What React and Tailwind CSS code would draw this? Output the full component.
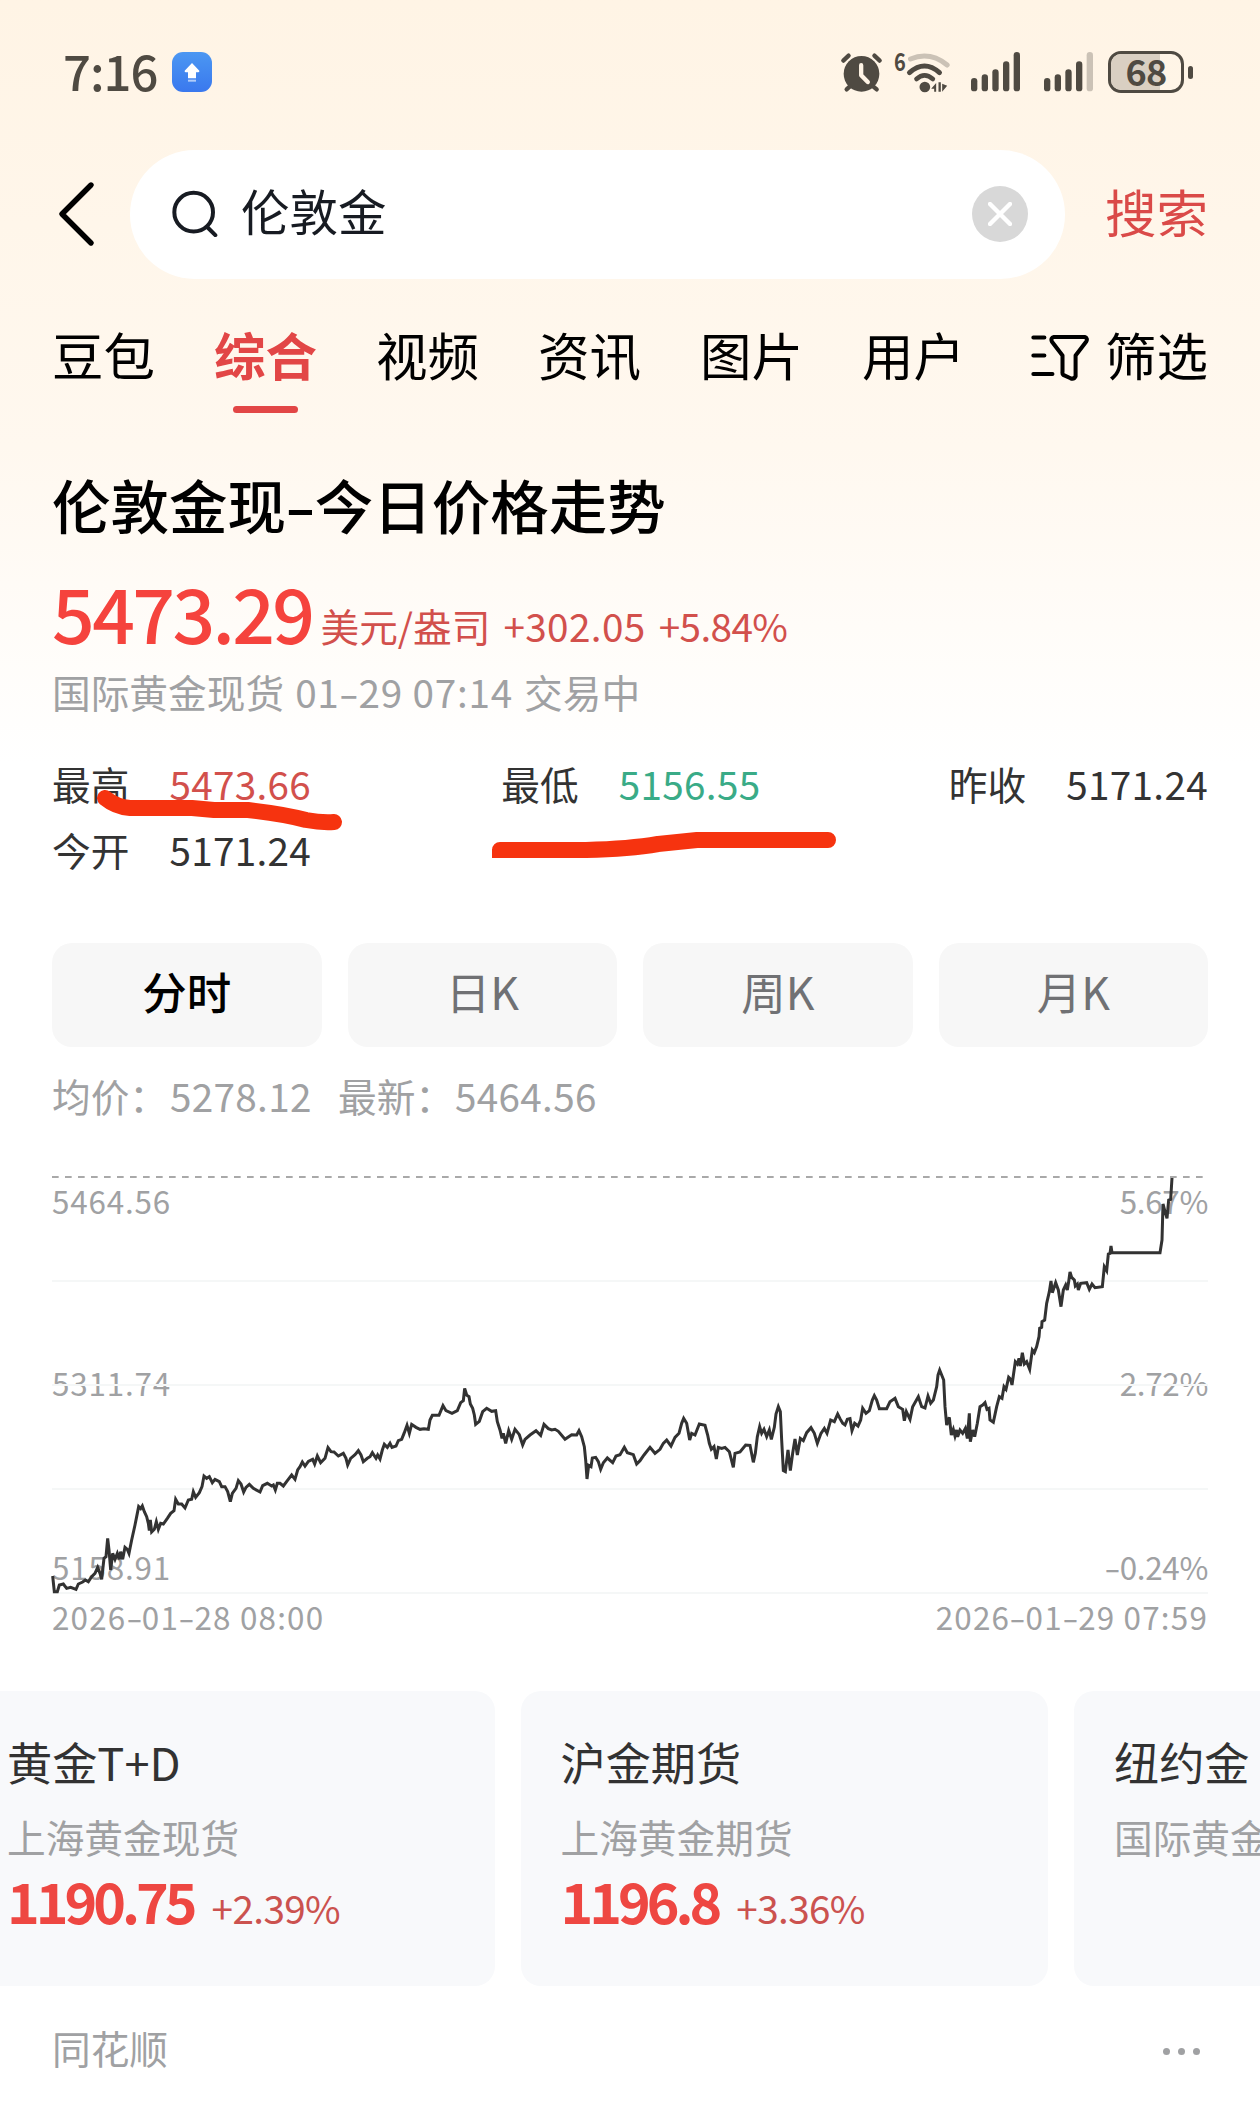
import React from 'react';

const tabs = ['豆包', '综合', '视频', '资讯', '图片', '用户'];

const periods = ['分时', '日K', '周K', '月K'];

const stats = [
  { label: '最高', value: '5473.66', color: 'text-[#d2504c]' },
  { label: '最低', value: '5156.55', color: 'text-[#3aab87]' },
  { label: '昨收', value: '5171.24', color: 'text-[#333333]' },
  { label: '今开', value: '5171.24', color: 'text-[#333333]' },
];

const cards = [
  { name: '黄金T+D', market: '上海黄金现货', price: '1190.75', change: '+2.39%' },
  { name: '沪金期货', market: '上海黄金期货', price: '1196.8', change: '+3.36%' },
  { name: '纽约金', market: '国际黄金期货', price: '', change: '' },
];

// Price series, three thirds of the trading day, three units to a pixel
const series = [
  {
    dx: 0,
    dy: 0,
    points:
      '158,1308 163,1355 172,1355 178,1335 190,1332 200,1345 212,1342 228,1348 235,1332 248,1326 256,1320 265,1325 275,1310 285,1300 293,1282 300,1300 305,1318 312,1255 318,1250 323,1195 327,1230 332,1290 338,1240 345,1258 352,1240 358,1258 362,1235 368,1258 375,1222 382,1228 387,1240 395,1200 405,1155 410,1130 416,1100 422,1106 427,1098 433,1115 440,1130 445,1150 448,1172 451,1140 455,1176 463,1168 469,1145 475,1168 482,1150 490,1152 502,1135 512,1120 522,1112 527,1078 535,1092 545,1092 555,1104 565,1080 575,1078 580,1055 587,1072 598,1058 606,1040 612,1008 620,1015 628,1010 637,1028 645,1018 658,1025 665,1040 675,1040 683,1055 691,1085 697,1060 708,1045 715,1022 723,1032 731,1056 738,1042 748,1033 760,1045 780,1056 788,1037 802,1030 815,1038 820,1035 826,1050 832,1030 840,1030 850,1038 862,1022 875,1005 885,1018 893,990 900,980 907,966 915,978 925,964 938,958 944,972 952,948 962,968 975,955 984,923 993,935 1002,936 1015,948 1030,940 1038,955 1043,975 1052,955 1065,944 1075,932 1083,945 1090,965 1102,955 1110,950 1117,938 1128,955 1133,945 1140,957 1147,930 1153,913 1162,922 1170,910 1176,922 1188,918 1195,902 1205,898 1213,878 1221,856 1228,880 1235,853 1248,862',
  },
  {
    dx: 1260,
    dy: 600,
    points:
      '0,268 12,266 25,268 30,240 37,226 57,226 69,197 78,212 96,220 112,212 122,188 130,182 134,145 140,165 147,170 151,192 158,205 163,225 167,253 178,244 188,215 200,205 215,214 227,212 232,245 240,270 246,295 250,280 257,310 266,272 275,298 285,268 298,284 308,315 315,298 330,285 348,272 362,286 372,253 385,266 395,270 405,268 415,274 435,298 455,284 470,285 477,272 485,290 493,320 497,360 501,417 506,376 513,380 517,354 527,352 535,365 542,388 550,368 562,354 578,368 588,348 600,344 613,322 622,338 640,344 650,372 660,362 672,345 690,322 705,340 720,328 730,310 740,300 753,318 765,292 777,280 785,250 791,235 800,250 809,300 815,280 825,285 838,252 855,256 863,285 868,310 874,328 882,320 889,357 895,322 905,325 915,322 928,335 940,382 945,340 960,336 977,315 990,316 1000,367 1006,340 1012,290 1019,260 1025,280 1032,268 1040,290 1048,270 1054,298 1063,262 1068,222 1075,200 1081,215 1085,300 1090,392 1096,395 1104,330 1111,392 1118,340 1125,297 1132,345 1141,295 1150,302 1160,278 1173,263 1183,280 1192,310 1203,280 1213,265 1221,280 1232,240 1243,245 1253,222',
  },
  {
    dx: 2520,
    dy: 0,
    points:
      '0,836 8,850 15,855 22,838 30,836 36,872 44,850 54,858 62,840 68,805 78,820 88,812 97,780 103,767 110,780 118,806 140,806 150,785 165,775 175,800 188,808 193,842 199,815 210,838 218,800 235,770 245,800 255,804 264,768 272,790 280,780 290,740 294,705 299,690 311,720 315,800 320,855 328,832 334,885 340,868 345,888 350,870 353,890 360,870 368,880 376,865 382,895 388,820 391,905 398,870 404,890 412,850 420,800 428,795 435,788 441,808 447,805 450,840 460,847 470,800 478,770 486,775 492,740 498,748 506,712 512,718 516,735 521,700 526,665 532,672 537,655 541,678 547,638 553,672 560,665 569,688 577,630 583,638 590,620 597,590 599,565 605,562 606,545 614,540 620,490 628,455 633,423 637,458 647,428 655,450 663,500 670,450 677,435 682,450 686,425 690,396 695,412 703,420 706,438 712,432 715,450 722,430 740,428 748,448 756,432 765,443 787,440 793,380 800,392 805,342 810,340 813,318 816,338 960,338 966,300 969,192 975,215 981,235 986,180 992,178 996,114',
  },
];

const linePoints = series
  .flatMap((s) =>
    s.points.split(' ').map((p) => {
      const [x, y] = p.split(',').map(Number);
      return `${x + s.dx},${y + s.dy}`;
    })
  )
  .join(' ');

// Wide hyphen, as in the phone's system font
function Dash() {
  return <span className="inline-block w-[0.49em] text-center tracking-normal"><span className="inline-block scale-x-150">-</span></span>;
}

function Dashed({ text }) {
  return text.split('-').map((part, i) => (
    <React.Fragment key={i}>
      {i > 0 && <Dash />}
      {part}
    </React.Fragment>
  ));
}

function SignalBars({ weak }) {
  return (
    <svg viewBox="0 0 147 120" className="w-[49px] h-[40px]" fill="#4f4a42">
      <rect x="0" y="78" width="19" height="40" rx="9.5" />
      <rect x="32" y="67" width="19" height="51" rx="9.5" />
      <rect x="64" y="52" width="19" height="66" rx="9.5" />
      <rect x="96" y="28" width="19" height="90" rx="9.5" />
      <rect x="128" y="0" width="19" height="118" rx="9.5" fill={weak ? '#cbc2b6' : '#4f4a42'} />
    </svg>
  );
}

function StatusBar() {
  return (
    <div className="h-[144px] flex items-center pl-[63px] pr-[67px] text-[#4f4a42]">
      <span className="text-[49px] leading-none font-medium tracking-[-0.02em] -translate-y-[3px]">7:16</span>
      <div className="ml-[15px] w-10 h-10 rounded-[11px] bg-linear-to-b from-[#4c97f2] to-[#3a78ee] flex items-center justify-center">
        <svg viewBox="0 0 48 60" className="w-4 h-5" fill="#fff">
          <path d="M24 3 L46 26 Q47 31 42 31 H36 V49 H12 V31 H6 Q1 31 2 26 Z" />
          <rect x="12" y="53" width="24" height="6" opacity="0.6" />
        </svg>
      </div>

      <div className="ml-auto flex items-center">
        <svg viewBox="30 34 130 124" className="w-[43px] h-[41px]" fill="none" stroke="#4f4a42" strokeLinecap="round">
          <circle cx="95" cy="100" r="54" fill="#4f4a42" stroke="none" />
          <path d="M40 60 L56 45 M134 45 L150 60" strokeWidth="13" />
          <path d="M60 138 L50 147 M130 138 L141 147" strokeWidth="13" />
          <path d="M94 74 V104 L114 125" stroke="#fff4e5" strokeWidth="13" strokeLinejoin="round" />
        </svg>
        <div className="relative ml-[11px]">
          <svg viewBox="193 30 170 126" className="w-[57px] h-[42px]" fill="none" stroke="#4f4a42" strokeLinecap="round">
            <path d="M242 54 Q300 30 352 72" stroke="#cbc2b6" strokeWidth="15" />
            <path d="M239 95 Q284 55 329 95" strokeWidth="15" />
            <path d="M260 114 Q284 92 309 114" strokeWidth="14" />
            <circle cx="285" cy="138" r="16" fill="#4f4a42" stroke="none" />
            <path d="M319 126 V152 H313 V143 L304 143 Z M326 124 H333 V152 H326 Z M337 128 L352 134 L337 152 Z" fill="#4f4a42" stroke="none" />
          </svg>
          <span className="absolute left-0 top-[-3px] text-[25px] leading-none font-bold origin-left scale-x-80">6</span>
        </div>
        <div className="ml-[20px]"><SignalBars /></div>
        <div className="ml-[24px]"><SignalBars weak /></div>
        <div className="relative ml-[15px] w-[76px] h-[42px] rounded-[13px] border-[3px] border-[#4f4a42] flex items-center justify-center">
          <div className="absolute left-0 top-0 w-[49px] h-full rounded-l-[10px] bg-[#d9cfc2]" />
          <span className="relative text-[36px] leading-[36px] font-bold tracking-[-0.02em] -translate-y-[2px]">68</span>
        </div>
        <div className="ml-[4px] w-[5px] h-[13px] rounded-full bg-[#4f4a42]" />
      </div>
    </div>
  );
}

function SearchRow() {
  return (
    <div className="mt-[6px] h-[129px] flex items-center pl-[58px] pr-[52px]">
      <svg viewBox="0 0 38 66" className="w-[38px] h-[66px] -translate-y-px" fill="none" stroke="#000" strokeWidth="5.4" strokeLinecap="round" strokeLinejoin="round">
        <path d="M33 4 L4 33 L33 62" />
      </svg>
      <div className="ml-[34px] w-[935px] h-full rounded-full bg-white flex items-center pl-[42px] pr-[37px]">
        <svg viewBox="0 0 138 140" className="w-[46px] h-[47px] -translate-y-px" fill="none" stroke="#171b22" strokeWidth="12" strokeLinecap="round">
          <circle cx="65" cy="66" r="58" />
          <path d="M107 112 L130 135" />
        </svg>
        <span className="ml-[23px] text-[48.5px] leading-none text-[#171b22] -translate-y-[4px]">伦敦金</span>
        <div className="ml-auto w-14 h-14 rounded-full bg-[#d8d8d8] flex items-center justify-center -translate-y-px">
          <svg viewBox="0 0 24 24" className="w-6 h-6" stroke="#fff" strokeWidth="4.4" strokeLinecap="round">
            <path d="M2 2 L22 22 M22 2 L2 22" />
          </svg>
        </div>
      </div>
      <span className="ml-auto text-[51.5px] leading-none text-[#da4a48] -translate-y-[4px]">搜索</span>
    </div>
  );
}

function Tabs() {
  return (
    <div className="mt-[42px] h-[100px] flex items-start px-[52px]">
      <div className="flex gap-[59px]">
        {tabs.map((tab) => (
          <div key={tab} className="flex flex-col items-center">
            <span className={`text-[51.5px] leading-[66px] ${tab === '综合' ? 'font-bold text-[#e24646]' : 'text-black'}`}>{tab}</span>
            {tab === '综合' && <span className="mt-[19px] w-[65px] h-[7px] rounded-full bg-[#e24646]" />}
          </div>
        ))}
      </div>
      <div className="ml-auto flex items-center">
        <svg viewBox="64 48 176 140" className="w-[59px] h-[47px] mt-[6px]" fill="none" stroke="#000" strokeWidth="12" strokeLinecap="round" strokeLinejoin="round">
          <path d="M71 58 H104 M71 112 H104 M71 167 H128" />
          <path d="M132 57 H224 Q234 60 229 70 L197 112 V174 Q192 184 182 180 L160 170 Q157 168 158 160 V112 L126 70 Q122 59 132 57 Z" />
        </svg>
        <span className="ml-[15px] text-[51.5px] leading-[66px] text-black">筛选</span>
      </div>
    </div>
  );
}

function PriceHeader() {
  return (
    <div className="mt-[43px] px-[52px]">
      <h1 className="text-[58.5px] leading-[80px] font-medium text-black">
        <Dashed text="伦敦金现-今日价格走势" />
      </h1>
      <div className="mt-[16px] h-[104px] flex items-baseline whitespace-nowrap text-[38.7px] text-[#d2504c]">
        <span className="text-[75px] leading-[104px] font-medium text-[#f5433d] tracking-[-0.035em]">5473.29</span>
        <span className="ml-[8px] -translate-y-[2px]">美元/盎司</span>
        <span className="ml-[13px] tracking-[0.01em] -translate-y-[2px]">+302.05</span>
        <span className="ml-[13px] tracking-[-0.016em] -translate-y-[2px]">+5.84%</span>
      </div>
      <div className="h-[54px] text-[38.7px] leading-[54px] text-[#a0a1a3] whitespace-nowrap">
        国际黄金现货
        <span className="mx-[11px] tracking-[0.02em]"><Dashed text="01-29 07:14" /></span>
        交易中
      </div>
    </div>
  );
}

function Stats() {
  return (
    <div className="relative mt-[32px] mx-[52px] grid grid-cols-3 text-[38.7px] leading-[66px]">
      {stats.map((s, i) => (
        <div key={s.label} className={`flex ${i === 1 ? 'pl-[64px]' : ''} ${i === 2 ? 'justify-end' : ''}`}>
          <span className="text-[#333333]">{s.label}</span>
          <span className={`ml-[40px] tracking-[0.008em] ${s.color}`}>{s.value}</span>
        </div>
      ))}
      {/* Marker strokes under high and low */}
      <svg viewBox="0 0 1156 132" className="absolute left-0 top-[2px] w-[1156px] h-[132px] overflow-visible" fill="none" stroke="#f6330f" strokeWidth="16" strokeLinecap="round" strokeLinejoin="round">
        <path d="M53 46 Q64 55 78 56 L140 56 L162 58 L196 58 Q232 62 254 68 Q270 71 282 70" />
        <path d="M448 98 L534 98 Q578 97 606 92 L645 88 L776 88" />
        <rect x="440" y="97" width="9" height="9" fill="#f6330f" stroke="none" />
      </svg>
    </div>
  );
}

function Chart() {
  return (
    <div className="px-[52px]">
      <div className="mt-[61px] grid grid-cols-4 gap-[26px]">
        {periods.map((p, i) => (
          <div
            key={p}
            className={`h-[104px] rounded-[20px] bg-[#f7f7f7] text-[44.5px] leading-[96px] text-center ${i === 0 ? 'font-medium text-black' : 'text-[#707174]'}`}
          >
            {p}
          </div>
        ))}
      </div>
      <div className="mt-[18px] h-[60px] flex text-[38.7px] leading-[60px] text-[#a0a1a3]">
        <span className="w-[118px]">均价：</span>
        <span className="w-[168px] tracking-[0.008em]">5278.12</span>
        <span className="w-[117px]">最新：</span>
        <span className="tracking-[0.008em]">5464.56</span>
      </div>

      <div className="relative mt-[52px] h-[416px] text-[31.4px] leading-[40px] text-[#a0a1a3]">
        <div className="absolute inset-x-0 top-[4px] flex justify-between"><span className="tracking-[0.026em]">5464.56</span><span className="tracking-[-0.01em]">5.67%</span></div>
        <div className="absolute inset-x-0 top-[186px] flex justify-between"><span className="tracking-[0.026em]">5311.74</span><span className="tracking-[-0.01em]">2.72%</span></div>
        <div className="absolute inset-x-0 top-[370px] flex justify-between"><span className="tracking-[0.026em]">5158.91</span><span className="tracking-[-0.01em]"><Dashed text="-0.24%" /></span></div>
        <svg viewBox="156 111 3468 1248" className="absolute left-0 top-0 w-[1156px] h-[416px] overflow-visible" fill="none">
          <path d="M156 423 H3624 M156 735 H3624 M156 1047 H3624 M156 1359 H3624" stroke="#f5f7f7" strokeWidth="6" />
          <path d="M156 111 H3624" stroke="#a9a9a9" strokeWidth="6" strokeDasharray="20 19" />
          <polyline points={linePoints} stroke="#323232" strokeWidth="9" strokeLinejoin="miter" />
        </svg>
      </div>
      <div className="mt-[2px] h-[44px] flex justify-between text-[31.4px] leading-[44px] text-[#a0a1a3] tracking-[0.038em]">
        <span><Dashed text="2026-01-28 08:00" /></span>
        <span><Dashed text="2026-01-29 07:59" /></span>
      </div>
    </div>
  );
}

function Cards() {
  return (
    <div className="mt-[52px] ml-[-33px] flex gap-[26px]">
      {cards.map((c) => (
        <div key={c.name} className="shrink-0 w-[527.5px] h-[295px] rounded-[20px] bg-[#f8f9fb] pl-[40px] pt-[39px] whitespace-nowrap">
          <div className="text-[45.2px] leading-[64px] text-[#323232]">{c.name}</div>
          <div className="mt-[15px] text-[38.7px] leading-[54px] text-[#a0a1a3]">{c.market}</div>
          <div className="h-[74px] flex items-baseline">
            <span className="text-[55.5px] leading-[74px] font-bold text-[#ee4742] tracking-[-0.072em]">{c.price}</span>
            <span className="ml-[18px] text-[38.7px] text-[#cb524f] tracking-[-0.016em]">{c.change}</span>
          </div>
        </div>
      ))}
    </div>
  );
}

export default function App() {
  return (
    <div className="w-[1260px] h-[2122px] overflow-hidden bg-white bg-linear-to-b from-[#fff4e5] from-0% via-[#fff8ef] via-[21%] to-white to-[36%] font-['Noto_Sans_CJK_SC',sans-serif]">
      <StatusBar />
      <SearchRow />
      <Tabs />
      <PriceHeader />
      <Stats />
      <Chart />
      <Cards />
      <div className="mt-[33px] px-[52px] flex items-center justify-between text-[38.7px] leading-[56px] text-[#a0a1a3]">
        <span>同花顺</span>
        <div className="flex gap-[8px] mr-[8px] mt-[8px]">
          <span className="w-[7px] h-[7px] rounded-full bg-[#a0a1a3]" />
          <span className="w-[7px] h-[7px] rounded-full bg-[#a0a1a3]" />
          <span className="w-[7px] h-[7px] rounded-full bg-[#a0a1a3]" />
        </div>
      </div>
    </div>
  );
}
